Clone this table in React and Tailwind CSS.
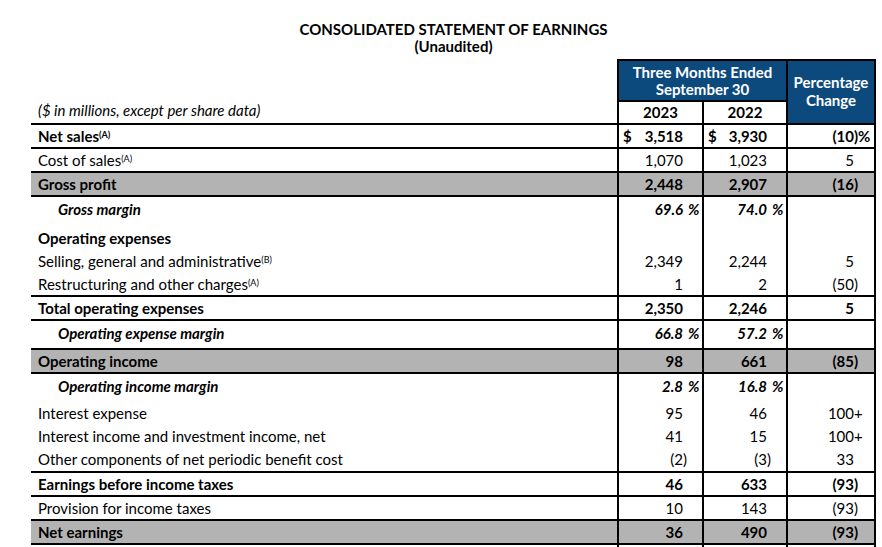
import React from "react";

const FONT = { fontFamily: "Lato, 'Open Sans', sans-serif" };

// n: number text, s: hanging suffix, d: show dollar sign
const rows = [
  { kind: "line" },
  {
    label: "Net sales",
    sup: "(A)",
    bold: true,
    c1: { n: "3,518", d: true },
    c2: { n: "3,930", d: true },
    c3: { n: "(10", s: ")%" },
  },
  { kind: "line" },
  { label: "Cost of sales", sup: "(A)", c1: { n: "1,070" }, c2: { n: "1,023" }, c3: { n: "5" } },
  { kind: "line" },
  { label: "Gross profit", bold: true, gray: true, c1: { n: "2,448" }, c2: { n: "2,907" }, c3: { n: "(16", s: ")" } },
  { kind: "line" },
  { label: "Gross margin", margin: true, c1: { n: "69.6", s: "\u2009 %" }, c2: { n: "74.0", s: "\u2009 %" } },
  { kind: "gap", h: "h-[5px]" },
  { label: "Operating expenses", bold: true, h: "h-[23px]" },
  {
    label: "Selling, general and administrative",
    sup: "(B)",
    h: "h-[23px]",
    c1: { n: "2,349" },
    c2: { n: "2,244" },
    c3: { n: "5" },
  },
  {
    label: "Restructuring and other charges",
    sup: "(A)",
    h: "h-[23px]",
    c1: { n: "1" },
    c2: { n: "2" },
    c3: { n: "(50", s: ")" },
  },
  { kind: "line" },
  { label: "Total operating expenses", bold: true, c1: { n: "2,350" }, c2: { n: "2,246" }, c3: { n: "5" } },
  { kind: "line" },
  { label: "Operating expense margin", margin: true, c1: { n: "66.8", s: "\u2009 %" }, c2: { n: "57.2", s: "\u2009 %" } },
  { kind: "gap", h: "h-[3px]" },
  { kind: "line" },
  { label: "Operating income", bold: true, gray: true, c1: { n: "98" }, c2: { n: "661" }, c3: { n: "(85", s: ")" } },
  { kind: "line" },
  { label: "Operating income margin", margin: true, c1: { n: "2.8", s: "\u2009 %" }, c2: { n: "16.8", s: "\u2009 %" } },
  { kind: "gap", h: "h-[3px]" },
  { label: "Interest expense", h: "h-[23px]", c1: { n: "95" }, c2: { n: "46" }, c3: { n: "100", s: "+" } },
  {
    label: "Interest income and investment income, net",
    h: "h-[23px]",
    c1: { n: "41" },
    c2: { n: "15" },
    c3: { n: "100", s: "+" },
  },
  {
    label: "Other components of net periodic benefit cost",
    h: "h-[24px]",
    c1: { n: "(2", s: ")" },
    c2: { n: "(3", s: ")" },
    c3: { n: "33" },
  },
  { kind: "line" },
  { label: "Earnings before income taxes", bold: true, c1: { n: "46" }, c2: { n: "633" }, c3: { n: "(93", s: ")" } },
  { kind: "line" },
  { label: "Provision for income taxes", c1: { n: "10" }, c2: { n: "143" }, c3: { n: "(93", s: ")" } },
  { kind: "line" },
  { label: "Net earnings", bold: true, gray: true, c1: { n: "36" }, c2: { n: "490" }, c3: { n: "(93", s: ")" } },
  { kind: "line" },
];

function Num({ v, pad }) {
  if (!v) return null;
  return (
    <div className={`flex h-full items-center ${pad} pl-[4px]`}>
      {v.d && <span>$</span>}
      <span className="ml-auto">{v.n}</span>
      {v.s ? <span className="w-0 whitespace-pre">{v.s}</span> : null}
    </div>
  );
}

function Row({ r }) {
  if (r.kind === "line") return <div className="h-[2px] bg-black" />;
  if (r.kind === "gap")
    return (
      <div className={`flex ${r.h}`}>
        <div className="w-[586px]" />
        <div className="w-[85px] border-l-2 border-black" />
        <div className="w-[84px] border-l-2 border-black" />
        <div className="w-[90px] border-x-2 border-black" />
      </div>
    );

  const h = r.h || (r.margin ? "h-[24px]" : "h-[22px]");
  const bg = r.gray ? "bg-[#b3b3b3]" : "bg-white";
  const weight = r.margin ? "font-bold italic" : r.bold ? "font-bold" : "font-normal";

  return (
    <div className={`flex ${h} ${bg} text-[15px] leading-[18px] ${weight}`}>
      <div className={`flex w-[586px] items-center ${r.margin ? "pl-[27px]" : "pl-[7px]"}`}>
        <span>{r.label}</span>
        {r.sup && <sup className="relative -top-[1px] text-[9px]">{r.sup}</sup>}
      </div>
      <div className="w-[85px] border-l-2 border-black">
        <Num v={r.c1} pad="pr-[19px]" />
      </div>
      <div className="w-[84px] border-l-2 border-black">
        <Num v={r.c2} pad="pr-[19px]" />
      </div>
      <div className="w-[90px] border-x-2 border-black">
        <Num v={r.c3} pad="pr-[20px]" />
      </div>
    </div>
  );
}

export default function App() {
  return (
    <div className="min-h-[547px] bg-white text-black" style={FONT}>
      <div className="w-[876px] pl-[31px]">
        <div className="flex flex-col items-center pt-[21px] text-[15px] font-bold leading-[17px]">
          <div>CONSOLIDATED STATEMENT OF EARNINGS</div>
          <div>(Unaudited)</div>
        </div>

        <div className="mt-[4px] flex">
          <div className="flex w-[586px] items-end pb-[2px] pl-[7px] text-[15px] italic">
            ($ in millions, except per share data)
          </div>
          <div className="w-[169px]">
            <div className="flex h-[41px] flex-col items-center justify-center border-l-2 border-t-2 border-black bg-[#0c4a7d] text-[15px] font-bold leading-[17px] text-white">
              <div>Three Months Ended</div>
              <div>September 30</div>
            </div>
            <div className="h-[2px] bg-black" />
            <div className="flex h-[21px] text-[15px] font-bold">
              <div className="flex w-[85px] items-center justify-center border-l-2 border-black">2023</div>
              <div className="flex w-[84px] items-center justify-center border-l-2 border-black">2022</div>
            </div>
          </div>
          <div className="flex h-[64px] w-[90px] flex-col items-center justify-center border-x-2 border-t-2 border-black bg-[#0c4a7d] pb-[2px] text-[15px] font-bold leading-[18px] text-white">
            <div>Percentage</div>
            <div>Change</div>
          </div>
        </div>

        {rows.map((r, i) => (
          <Row key={i} r={r} />
        ))}

        <div className="flex h-[10px]">
          <div className="w-[586px]" />
          <div className="w-[85px] border-l-2 border-black" />
          <div className="w-[84px] border-l-2 border-black" />
          <div className="w-[90px] border-x-2 border-black" />
        </div>
      </div>
    </div>
  );
}
